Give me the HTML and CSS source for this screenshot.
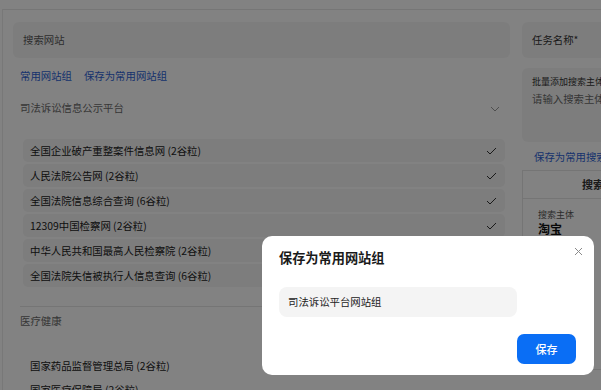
FILE: index.html
```html
<!DOCTYPE html>
<html lang="zh">
<head>
<meta charset="utf-8">
<link rel="stylesheet" href="styles.css">
</head>
<body>
<div class="app">
  <div class="main">
    <section class="left">
      <div class="search">搜索网站</div>
      <div class="links"><span>常用网站组</span><span>保存为常用网站组</span></div>
      <div class="group-head">
        <span>司法诉讼信息公示平台</span>
        <svg class="chev" width="10" height="6" viewBox="0 0 10 6"><path d="M1 1l4 4 4-4" fill="none" stroke="#9a9a9a" stroke-width="1"/></svg>
      </div>
      <ul class="list">
        <li>全国企业破产重整案件信息网 (2谷粒)<svg class="tick" width="11" height="8" viewBox="0 0 11 8"><path d="M1 4l3 3 6-6" fill="none" stroke="#333" stroke-width="1"/></svg></li>
        <li>人民法院公告网 (2谷粒)<svg class="tick" width="11" height="8" viewBox="0 0 11 8"><path d="M1 4l3 3 6-6" fill="none" stroke="#333" stroke-width="1"/></svg></li>
        <li>全国法院信息综合查询 (6谷粒)<svg class="tick" width="11" height="8" viewBox="0 0 11 8"><path d="M1 4l3 3 6-6" fill="none" stroke="#333" stroke-width="1"/></svg></li>
        <li>12309中国检察网 (2谷粒)<svg class="tick" width="11" height="8" viewBox="0 0 11 8"><path d="M1 4l3 3 6-6" fill="none" stroke="#333" stroke-width="1"/></svg></li>
        <li>中华人民共和国最高人民检察院 (2谷粒)<svg class="tick" width="11" height="8" viewBox="0 0 11 8"><path d="M1 4l3 3 6-6" fill="none" stroke="#333" stroke-width="1"/></svg></li>
        <li>全国法院失信被执行人信息查询 (6谷粒)<svg class="tick" width="11" height="8" viewBox="0 0 11 8"><path d="M1 4l3 3 6-6" fill="none" stroke="#333" stroke-width="1"/></svg></li>
      </ul>
      <div class="divider"></div>
      <div class="group-head plain"><span>医疗健康</span></div>
      <ul class="list flat">
        <li>国家药品监督管理总局 (2谷粒)</li>
        <li>国家医疗保障局 (2谷粒)</li>
      </ul>
    </section>
    <section class="right">
      <div class="field">任务名称*</div>
      <div class="area">
        <div class="area-label">批量添加搜索主体</div>
        <div class="area-ph">请输入搜索主体</div>
      </div>
      <div class="rlink">保存为常用搜索主体</div>
      <div class="box">
        <div class="box-head">搜索主体</div>
        <div class="box-body">
          <div class="sub-label">搜索主体</div>
          <div class="sub-val">淘宝</div>
        </div>
      </div>
    </section>
  </div>
</div>
<div class="mask"></div>
<div class="modal">
  <div class="modal-title">保存为常用网站组</div>
  <svg class="close" width="9" height="9" viewBox="0 0 9 9"><path d="M1 1l7 7M8 1l-7 7" fill="none" stroke="#8a8a8a" stroke-width="1"/></svg>
  <div class="modal-input">司法诉讼平台网站组</div>
  <div class="modal-foot"><button class="btn">保存</button></div>
</div>
</body>
</html>
```
FILE: styles.css
```css
* { box-sizing: border-box; }
html, body { margin: 0; padding: 0; }
body {
  width: 601px; height: 390px; overflow: hidden; background: #fff;
  font-family: "PingFang SC", "Noto Sans CJK SC", "Noto Sans", sans-serif;
  color: #1f1f1f; font-size: 10.4px;
}
.app { padding: 9px 0 0 2px; width: 601px; overflow: hidden; }
.main {
  border-top: 1px solid #e8e8e8; border-left: 1px solid #ececec;
  display: flex; gap: 12px; padding: 12px 0 0 10px; width: 740px;
}
.left { width: 497px; flex: none; }
.search {
  height: 36px; background: #f6f6f6; border-radius: 6px;
  padding-left: 10px; line-height: 36px; color: #5a5a5a;
}
.links { margin-top: 9px; padding-left: 7px; line-height: 18px; color: #2e63d6; display: flex; gap: 12px; }
.group-head {
  margin-top: 14px; padding: 0 10px 0 7px; line-height: 18px; color: #6a6a6a;
  display: flex; justify-content: space-between; align-items: center;
}
.chev { margin-top: 2px; }
.list { list-style: none; margin: 22px 0 0; padding: 0 5px 0 10px; display: flex; flex-direction: column; gap: 2px; }
.list li {
  height: 23px; line-height: 23px; background: #f5f5f5; border-radius: 5px;
  padding: 0 8px 0 7px; display: flex; justify-content: space-between; align-items: center;
  color: #222;
}
.divider { height: 1px; background: #e6e6e6; margin: 19px 0 0 7px; }
.group-head.plain { margin-top: 5px; }
.list.flat { margin-top: 24px; gap: 1px; }
.list.flat li { background: none; }
.right { width: 200px; flex: none; }
.field {
  height: 36px; background: #f6f6f6; border-radius: 6px; padding-left: 10px;
  line-height: 36px; color: #333;
}
.area { margin-top: 10px; height: 74px; background: #f6f6f6; border-radius: 6px; padding: 7px 10px; }
.area-label { font-size: 9px; line-height: 14px; color: #333; }
.area-ph { font-size: 10.4px; line-height: 18px; color: #6a6a6a; margin-top: 1px; }
.rlink { margin-top: 6px; padding-left: 12px; line-height: 18px; color: #2e63d6; }
.box { margin-top: 4px; border: 1px solid #e6e6e6; width: 140px; height: 200px; }
.box-head { height: 28px; line-height: 27px; border-bottom: 1px solid #e6e6e6; font-size: 11px; font-weight: 600; color: #333; padding-left: 59px; }
.box-body { padding: 9px 0 0 15px; }
.sub-label { font-size: 9px; line-height: 13px; color: #555; }
.sub-val { font-size: 12px; line-height: 15px; font-weight: 600; color: #111; }
.mask { position: fixed; inset: 0; background: rgba(0,0,0,0.49); }
.modal {
  position: fixed; left: 262px; top: 236px; width: 332px; height: 139px;
  background: #fff; border-radius: 10px; padding: 12px 18px 0 17px;
}
.modal-title { font-size: 13.2px; font-weight: 600; line-height: 20px; color: #1a1a1a; }
.close { position: absolute; right: 11px; top: 11px; }
.modal-input {
  margin-top: 19px; width: 238px; height: 30px; background: #f4f4f4; border-radius: 8px;
  padding-left: 9px; line-height: 30px; color: #222;
}
.modal-foot { display: flex; justify-content: flex-end; margin-top: 17px; }
.btn {
  width: 59px; height: 30px; border: none; border-radius: 7px; background: #0a6ef5;
  color: #fff; font-size: 11px; font-family: inherit; font-weight: 500;
}
```
